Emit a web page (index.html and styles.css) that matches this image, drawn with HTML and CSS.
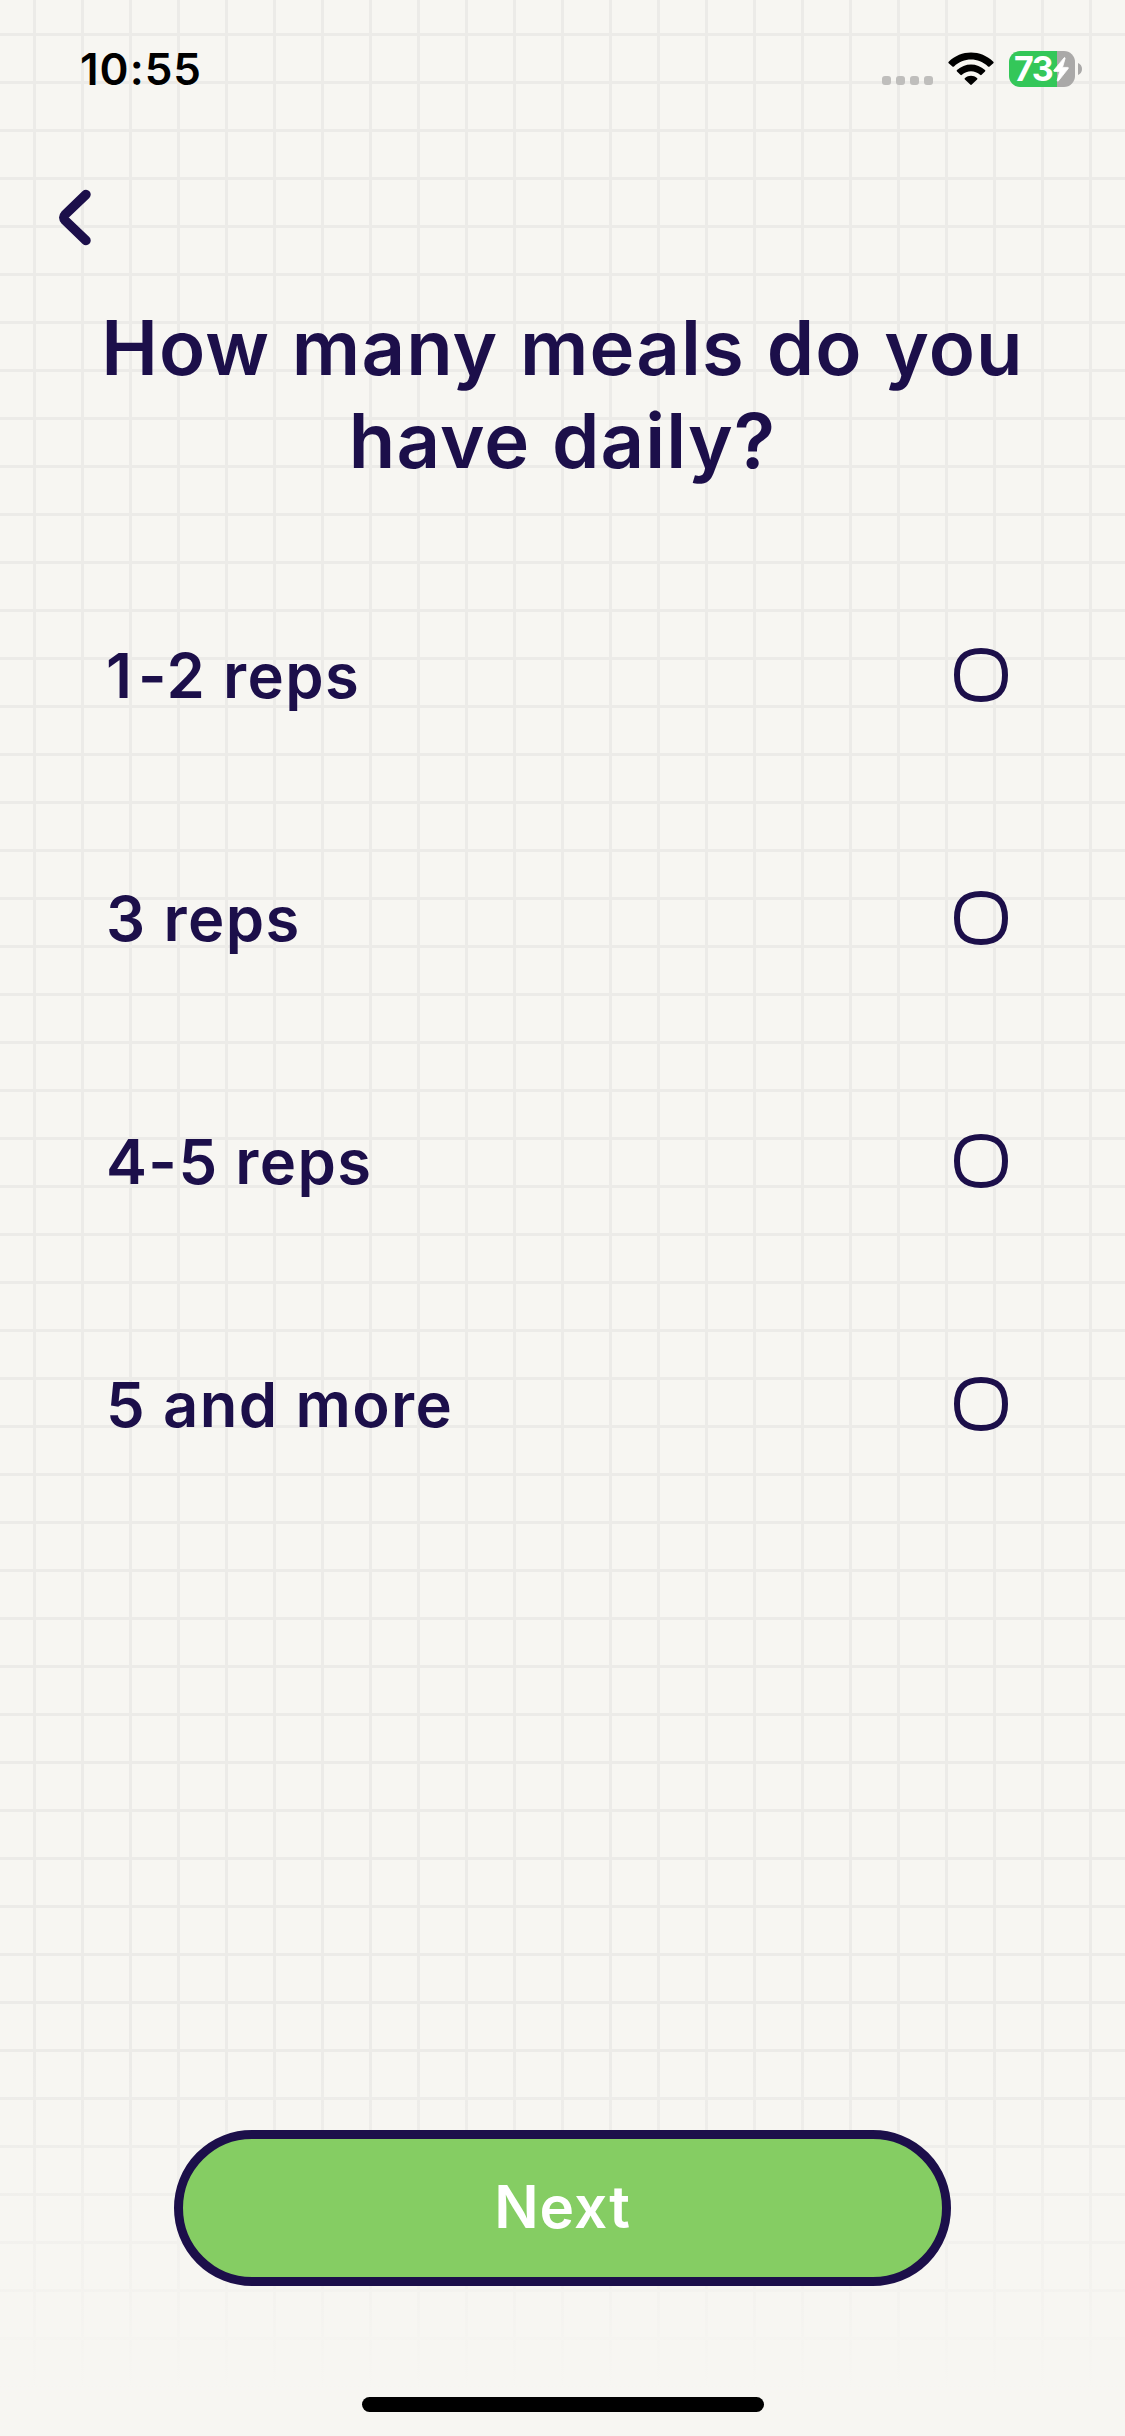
FILE: index.html
```html
<!DOCTYPE html>
<html lang="en">
<head>
<meta charset="utf-8">
<title>How many meals do you have daily?</title>
<link rel="stylesheet" href="styles.css">
</head>
<body>
<div class="screen">
  <header class="status">
    <span class="time">10:55</span>
    <div class="indicators">
      <div class="cell"><i></i><i></i><i></i><i></i></div>
      <svg class="wifi" viewBox="0 0 46 33" width="46" height="33">
        <path d="M0.7 9.8C13-2.6 33-2.6 45.3 9.8c.5.5.5 1 0 1.500L41.600 14.400c-.5.5-1.100.5-1.600 0C30.500 5.200 15.500 5.200 6 14.400c-.5.5-1.100.5-1.600 0L.7 11.300c-.5-.5-.5-1 0-1.500z"/>
        <path d="M9 18.100c7.900-7.600 20.100-7.600 28 0 .5.5.5 1 0 1.500l-3.400 3.200c-.5.5-1 .5-1.500 0-5.200-4.700-13-4.700-18.200 0-.5.5-1 .5-1.500 0L9 19.600c-.5-.5-.5-1 0-1.500z"/>
        <path d="M17 26c3.500-3 8.500-3 12 0 .6.5.6 1 .1 1.500l-5.300 5.100c-.5.5-1.100.5-1.600 0L16.900 27.500c-.5-.5-.5-1 .1-1.500z"/>
      </svg>
      <div class="battery">
        <div class="level">
          <span class="percent">73</span>
          <svg class="bolt" viewBox="0 0 16 25" width="16" height="25"><path d="M11 .9.9 13.200c-.4.700-.2 1.200.5 1.200h5.300L4.300 23.300c-.2.900.6 1.200 1.200.5L15.200 11.600c.4-.7.2-1.200-.5-1.200H9.500L12.100 1.500c.2-.9-.6-1.200-1.100-.6z"/></svg>
        </div>
        <svg class="nub" viewBox="0 0 4 12" width="4" height="12"><path d="M0 0c2.500 1 4 3.300 4 6s-1.500 5-4 6z"/></svg>
      </div>
    </div>
  </header>

  <nav class="nav">
    <button class="back" aria-label="Back">
      <svg viewBox="0 0 33 57" width="33" height="57"><path d="M27 5.500 6.300 25.400Q3.600 28.500 6.300 31.600L27 51.500"/></svg>
    </button>
  </nav>

  <h1 class="title">How many meals do you<br>have daily?</h1>

  <ul class="options">
    <li class="option"><span>1-2 reps</span><svg class="ring" viewBox="0 0 54 54"><path d="M27 3C43.500 3 51 10.500 51 27S43.500 51 27 51 3 43.500 3 27 10.500 3 27 3z"/></svg></li>
    <li class="option"><span>3 reps</span><svg class="ring" viewBox="0 0 54 54"><path d="M27 3C43.500 3 51 10.500 51 27S43.500 51 27 51 3 43.500 3 27 10.500 3 27 3z"/></svg></li>
    <li class="option"><span>4-5 reps</span><svg class="ring" viewBox="0 0 54 54"><path d="M27 3C43.500 3 51 10.500 51 27S43.500 51 27 51 3 43.500 3 27 10.500 3 27 3z"/></svg></li>
    <li class="option"><span>5 and more</span><svg class="ring" viewBox="0 0 54 54"><path d="M27 3C43.500 3 51 10.500 51 27S43.500 51 27 51 3 43.500 3 27 10.500 3 27 3z"/></svg></li>
  </ul>

  <footer class="footer">
    <button class="next">Next</button>
    <div class="home"></div>
  </footer>
</div>
</body>
</html>
```
FILE: styles.css
```css
* {
  box-sizing: border-box;
}

body {
  margin: 0;
  background: #f7f6f2;
}

button {
  margin: 0;
  padding: 0;
  border: 0;
  background: none;
  font: inherit;
}

svg {
  display: block;
}

.screen {
  display: flex;
  flex-direction: column;
  width: 1125px;
  height: 2436px;
  color: #1c0f4a;
  font-family: Inter, "Liberation Sans", sans-serif;
  font-weight: 600;
  /* fade towards the home bar, over 48px squared paper */
  background:
    linear-gradient(rgba(247, 246, 242, 0) 2060px, #f7f6f2 2390px),
    repeating-linear-gradient(to right, transparent 0 33px, #ecebe8 33px 36px, transparent 36px 48px),
    repeating-linear-gradient(to bottom, transparent 0 33px, #ecebe8 33px 36px, transparent 36px 48px),
    #f7f6f2;
}

.status {
  display: flex;
  justify-content: space-between;
  height: 132px;
  padding: 0 43px 0 80px;
  color: #000;
}

.time {
  margin-top: 42px;
  font-size: 44px;
  line-height: 54px;
  letter-spacing: 1px;
}

.indicators {
  display: flex;
  align-items: flex-start;
}

.cell {
  display: flex;
  gap: 5px;
  margin: 76px 15px 0 0;
}

.cell i {
  width: 9px;
  height: 9px;
  border-radius: 3px;
  background: #bfbebc;
}

.wifi {
  margin: 52px 15px 0 0;
}

.battery {
  display: flex;
  align-items: center;
  gap: 3px;
  margin-top: 51px;
}

.level {
  display: flex;
  align-items: center;
  width: 66px;
  height: 36px;
  padding-left: 5px;
  border-radius: 11px;
  background: linear-gradient(to right, #34c759 48px, #aaa9a8 48px);
}

.percent {
  width: 39px;
  color: #fff;
  font-size: 34px;
  font-weight: 700;
  line-height: 36px;
  letter-spacing: -1.500px;
}

.bolt {
  overflow: visible;
  fill: #fff;
  stroke: #fff;
  stroke-width: 0.8;
}

.nub {
  fill: #aaa9a8;
}

.nav {
  height: 169px;
  padding: 57px 0 0 59px;
}

.back {
  display: block;
}

.back path {
  fill: none;
  stroke: #1c0f4a;
  stroke-width: 9.5;
  stroke-linecap: round;
  stroke-linejoin: round;
}

.title {
  height: 252.500px;
  margin: 0;
  font-size: 76px;
  font-weight: 600;
  line-height: 93px;
  letter-spacing: 1.100px;
  word-spacing: 1.500px;
  text-align: center;
}

.options {
  margin: 0;
  padding: 0;
  list-style: none;
}

.option {
  display: flex;
  align-items: center;
  justify-content: space-between;
  height: 243px;
  padding: 0 117px 0 106px;
  font-size: 61.500px;
  letter-spacing: 1.400px;
}

/* the narrow "1" needs a little more room before the dash */
.option:first-child span::first-letter {
  letter-spacing: 6px;
}

.ring {
  width: 54px;
  height: 54px;
  fill: none;
  stroke: #1c0f4a;
  stroke-width: 6;
}

.footer {
  display: flex;
  flex-direction: column;
  align-items: center;
  gap: 111px;
  margin-top: auto;
  padding-bottom: 24px;
}

.next {
  width: 777px;
  height: 156px;
  padding-bottom: 3px;
  border: 9px solid #1c0f4a;
  border-radius: 78px;
  background: #85cd63;
  color: #fff;
  font-size: 58.500px;
  letter-spacing: 1px;
}

.option span {
  display: block;
}

.home {
  width: 402px;
  height: 15px;
  border-radius: 8px;
  background: #000;
}
```
